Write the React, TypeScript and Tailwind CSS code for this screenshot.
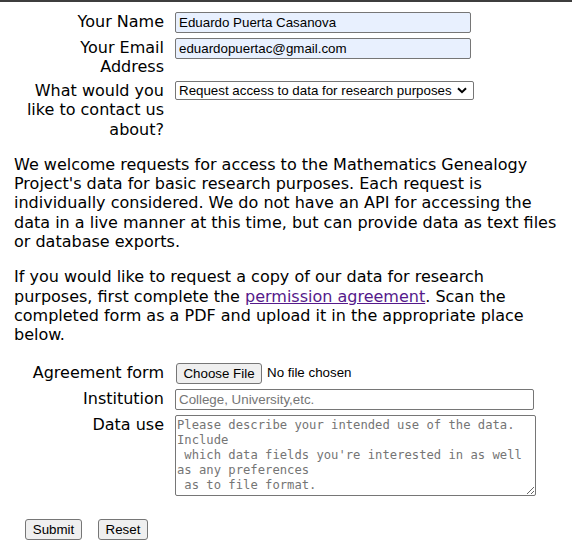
import type { ReactNode } from "react";

const pageFont = "font-['DejaVu_Sans',Verdana,sans-serif] text-[16px] leading-[19.3px] text-black";
const controlFont = "font-['Liberation_Sans',Arial,sans-serif] text-[13.333px] tracking-normal";

interface FieldRowProps {
  label: ReactNode;
  children: ReactNode;
  className?: string;
}

function FieldRow({ label, children, className = "" }: FieldRowProps) {
  return (
    <div className={`flex items-start ${className}`}>
      <label className="w-[150px] shrink-0 pt-px text-right">{label}</label>
      <div className="ml-[11px] pt-px">{children}</div>
    </div>
  );
}

function ChevronDown() {
  return (
    <svg width="10" height="7" viewBox="0 0 10 7" className="shrink-0">
      <path d="M1 1.2 L5 5.2 L9 1.2" fill="none" stroke="#000" strokeWidth="2" />
    </svg>
  );
}

export default function App() {
  return (
    <div className={`min-h-[551px] bg-white ${pageFont}`}>
      <div className="h-[2px] bg-[#3d3d3d]" />

      <div className="pl-[14px] pt-[9px]">
        <div className="flex flex-col">
          <FieldRow label="Your Name" className="h-[26px]">
            <input
              defaultValue="Eduardo Puerta Casanova"
              className={`block h-[21px] w-[296px] rounded-[2px] border border-[#767676] bg-[#e8f0fe] px-[3px] outline-none ${controlFont}`}
            />
          </FieldRow>
          <FieldRow label={<>Your Email<br />Address</>} className="h-[43px]">
            <input
              defaultValue="eduardopuertac@gmail.com"
              className={`block h-[21px] w-[296px] rounded-[2px] border border-[#767676] bg-[#e8f0fe] px-[3px] outline-none ${controlFont}`}
            />
          </FieldRow>
          <FieldRow label={<>What would you<br />like to contact us<br />about?</>}>
            <div
              className={`flex h-[19px] w-[299px] items-center justify-between rounded-[2px] border border-[#767676] bg-white pl-[3px] pr-[6px] ${controlFont}`}
            >
              <span>Request access to data for research purposes</span>
              <ChevronDown />
            </div>
          </FieldRow>
        </div>

        <p className="mt-[16px] whitespace-nowrap">
          We welcome requests for access to the Mathematics Genealogy
          <br />
          Project's data for basic research purposes. Each request is
          <br />
          individually considered. We do not have an API for accessing the
          <br />
          data in a live manner at this time, but can provide data as text files
          <br />
          or database exports.
        </p>

        <p className="mt-[16px] whitespace-nowrap">
          If you would like to request a copy of our data for research
          <br />
          purposes, first complete the{" "}
          <a href="#" className="text-[#551a8b] underline">
            permission agreement
          </a>
          . Scan the
          <br />
          completed form as a PDF and upload it in the appropriate place
          <br />
          below.
        </p>

        <div className="mt-[17px] flex flex-col">
          <FieldRow label="Agreement form" className="h-[26px]">
            <div className={`flex items-center ${controlFont}`}>
              <button
                type="button"
                className="ml-px h-[21px] w-[86px] rounded-[3px] border border-[#767676] bg-[#efefef] text-black"
              >
                Choose File
              </button>
              <span className="ml-[5px]">No file chosen</span>
            </div>
          </FieldRow>
          <FieldRow label="Institution" className="h-[26px]">
            <input
              placeholder="College, University,etc."
              className={`block h-[21px] w-[359px] rounded-[2px] border border-[#767676] bg-white px-[3px] outline-none placeholder:text-[#757575] ${controlFont}`}
            />
          </FieldRow>
          <FieldRow label="Data use">
            <textarea
              placeholder={
                "Please describe your intended use of the data.\nInclude\n which data fields you're interested in as well\nas any preferences\n as to file format."
              }
              className="block h-[81px] w-[361px] rounded-[2px] border border-[#767676] bg-white px-px py-[2px] font-['DejaVu_Sans_Mono',monospace] text-[12.2px] leading-[15px] tracking-normal outline-none placeholder:text-[#757575]"
            />
          </FieldRow>
        </div>

        <div className={`mt-[23px] flex gap-[16px] pl-[11px] ${controlFont}`}>
          <button
            type="submit"
            className="h-[21px] w-[57px] rounded-[3px] border border-[#767676] bg-[#efefef] text-black"
          >
            Submit
          </button>
          <button
            type="reset"
            className="h-[21px] w-[50px] rounded-[3px] border border-[#767676] bg-[#efefef] text-black"
          >
            Reset
          </button>
        </div>
      </div>
    </div>
  );
}
